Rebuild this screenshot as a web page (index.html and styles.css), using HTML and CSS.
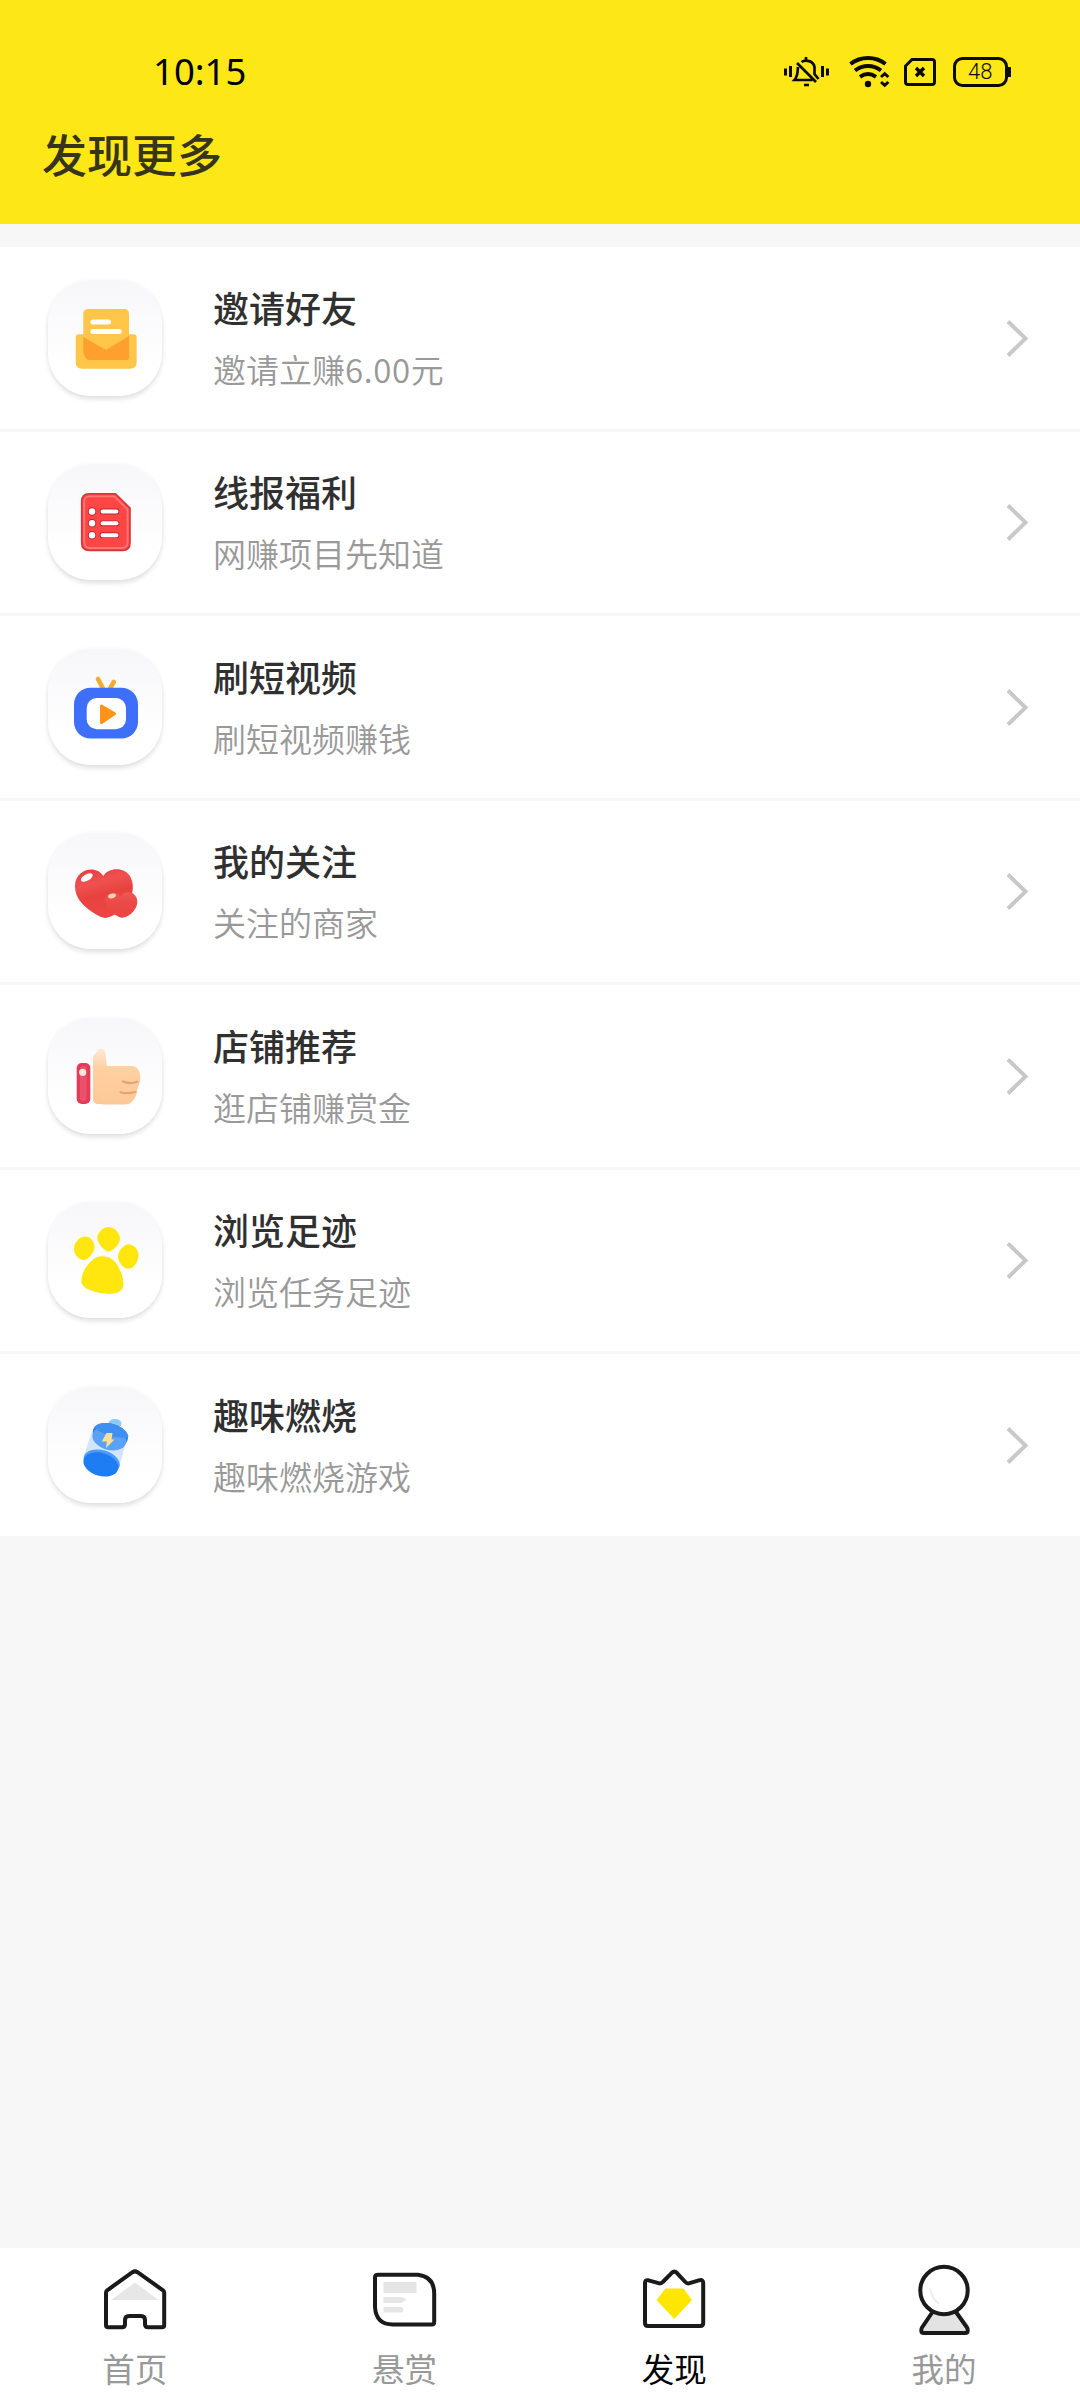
FILE: index.html
```html
<!DOCTYPE html>
<html lang="zh-CN">
<head>
<meta charset="utf-8">
<title>发现更多</title>
<link rel="stylesheet" href="styles.css">
</head>
<body>
<div class="app">
  <header class="header">
    <div class="status">
      <span class="time">10:15</span>
      <svg class="status-icons" width="240" height="40" viewBox="0 0 240 40" fill="none" stroke="#0c0a00" stroke-width="3">
        <!-- muted bell -->
        <path d="M5.500 16.500v7M10.500 14v11M42.500 14v11M47.500 16.500v7"/>
        <path d="M26 5v3M21.500 10c4-3 12-1 13 5v7l4 5M18 15c-.5 5 0 9-3.500 13h18M17 11l19 19" stroke-width="2.700"/>
        <path d="M24 33h5" stroke-width="2.600"/>
        <!-- wifi -->
        <path d="M70.500 12c10-8 25-8 35 0M75 18.500c8-6 18-6 26 0M80 24.800c5-3.500 11-3.500 16 0" stroke-width="4"/>
        <circle cx="88" cy="32" r="3.200" fill="#0c0a00" stroke="none"/>
        <path d="M101 25l3.700-3.300 3.700 3.300M101 30l3.700 3.300 3.700-3.300" stroke-width="3"/>
        <!-- sim -->
        <path d="M132 7.500h20a2.500 2.500 0 0 1 2.500 2.500v20a2.500 2.500 0 0 1-2.500 2.500h-24a2.500 2.500 0 0 1-2.500-2.500V14z"/>
        <path d="M136 16l8 8M144 16l-8 8" stroke-width="3.400"/>
        <!-- battery -->
        <rect x="174.500" y="6.500" width="52" height="27" rx="8"/>
        <path d="M229.500 15v10" stroke-width="3"/>
        <text x="200.300" y="27" class="battery-text">48</text>
      </svg>
    </div>
    <h1 class="page-title">发现更多</h1>
  </header>

  <main class="list">
    <a class="row">
      <span class="tile"><svg viewBox="0 0 114 116">
        <path d="M40.500 29H76q5 0 5 5v20.300h4.500q3.200 0 3.200 3.200V82q0 6.700-6.500 6.700h-48q-6.500 0-6.500-6.700V57.500q0-3.200 3.200-3.200h4.400V34q0-5 5.200-5z" fill="#ffc64a"/>
        <path d="M35.300 57L58 70l23-14v21.500q0 2.500-2.500 2.500H42q-3 0-4.500-2.500T35.300 72z" fill="#ff9f2e"/>
        <path d="M45 42h15.500M45 51.600h26.200" stroke="#fff" stroke-width="5" stroke-linecap="round"/>
      </svg></span>
      <span class="text"><b class="name">邀请好友</b><span class="desc">邀请立赚<span class="amount">6.00</span>元</span></span>
      <svg class="chevron" viewBox="0 0 24 40"><path d="M2 2.500L19.500 19.500 2 36.500"/></svg>
    </a>
    <a class="row">
      <span class="tile"><svg viewBox="0 0 114 116">
        <path d="M41 29.800h26.500L82 44v35q0 7.500-7.500 7.500H41.500q-7.800 0-7.800-7.500V37.500q0-7.700 7.300-7.700z" fill="#ff4644" stroke="#d6343d" stroke-width="1.600"/>
        <path d="M41.500 32.300h25L79.600 45.500V78q0 6-6 6H42q-5.800 0-5.800-6V38q0-5.700 5.300-5.700z" fill="none" stroke="#ff7771" stroke-width="1.800"/>
        <path d="M44 47.500h.1M44 59.300h.1M44 71.200h.1" stroke="#bd2630" stroke-width="8.500" stroke-linecap="round"/>
        <path d="M54.500 47.500h14M54.500 59.300h14M54.500 71.200h14" stroke="#bd2630" stroke-width="5.800" stroke-linecap="round"/>
        <path d="M44 47.500h.1M44 59.300h.1M44 71.200h.1" stroke="#fff" stroke-width="6.400" stroke-linecap="round"/>
        <path d="M54.500 47.500h14M54.500 59.300h14M54.500 71.200h14" stroke="#fff" stroke-width="4" stroke-linecap="round"/>
      </svg></span>
      <span class="text"><b class="name">线报福利</b><span class="desc">网赚项目先知道</span></span>
      <svg class="chevron" viewBox="0 0 24 40"><path d="M2 2.500L19.500 19.500 2 36.500"/></svg>
    </a>
    <a class="row">
      <span class="tile"><svg viewBox="0 0 114 116">
        <path d="M50 30l5 9.500M65.800 33L62 39.500" stroke="#f0ad2e" stroke-width="4.600" stroke-linecap="round"/>
        <rect x="26" y="38.700" width="64" height="50.800" rx="16.500" fill="#3d6ffb"/>
        <rect x="38.700" y="49" width="39.300" height="31.300" rx="10" fill="#fff"/>
        <path d="M53.500 57v16.500L66.500 64.800z" fill="#ff9418" stroke="#ff9418" stroke-width="3" stroke-linejoin="round"/>
      </svg></span>
      <span class="text"><b class="name">刷短视频</b><span class="desc">刷短视频赚钱</span></span>
      <svg class="chevron" viewBox="0 0 24 40"><path d="M2 2.500L19.500 19.500 2 36.500"/></svg>
    </a>
    <a class="row">
      <span class="tile"><svg viewBox="0 0 114 116">
        <defs>
          <linearGradient id="heart" x1="0" y1="0" x2=".3" y2="1"><stop offset="0" stop-color="#e23c40"/><stop offset=".35" stop-color="#ef5150"/><stop offset=".6" stop-color="#e8423f"/><stop offset="1" stop-color="#ee4544"/></linearGradient>
          <linearGradient id="small-heart" x1="0" y1="0" x2="0" y2="1"><stop offset="0" stop-color="#ee5a54"/><stop offset=".4" stop-color="#ea4a47"/><stop offset="1" stop-color="#ee4443"/></linearGradient>
          <linearGradient id="skin" x1="0" y1="0" x2="0" y2="1"><stop offset="0" stop-color="#ffe9dc"/><stop offset=".35" stop-color="#ffd0a0"/><stop offset="1" stop-color="#fdc898"/></linearGradient>
        </defs>
        <path d="M55.300 43C60 35 76 33 82.500 44c5 10 2 24-8 31-5 5-9 8-14 9.300q-4 1.400-8-.5C40 77 27 68 27 53 27 36 48 31 55.300 43z" fill="url(#heart)"/>
        <path d="M72.500 63.500c4-6 13-5.500 16 1 2.500 7-1.500 13.500-7 17.500q-6 4-10.500 2C64 80 57 76 57.500 67.500 58 59 68.500 57 72.500 63.500z" fill="url(#small-heart)"/>
        <ellipse cx="38.800" cy="44.500" rx="6.600" ry="3.200" fill="#fff" transform="rotate(-30 38.800 44.500)"/>
        <ellipse cx="64" cy="63" rx="4" ry="2.200" fill="#ffd3b5" transform="rotate(-15 64 63)"/>
      </svg></span>
      <span class="text"><b class="name">我的关注</b><span class="desc">关注的商家</span></span>
      <svg class="chevron" viewBox="0 0 24 40"><path d="M2 2.500L19.500 19.500 2 36.500"/></svg>
    </a>
    <a class="row">
      <span class="tile"><svg viewBox="0 0 114 116">
        <rect x="28.700" y="45" width="13.600" height="41" rx="5" fill="#e53b59"/>
        <rect x="32" y="48" width="6.500" height="35" rx="3" fill="#f0607a" opacity=".6"/>
        <circle cx="34.700" cy="54.300" r="3.600" fill="#ffe3dc"/>
        <path d="M45 41c0-5 3-5 4-8 1-4 8-3.500 8.500 2 .7 5 .5 8 1.500 13h25c5 0 8.300 5 8.300 11.500 0 6-2 8-3 12-.7 8-4 11-8 14.500-3 1-28 .5-32.300 0q-4-1-4-5z" fill="url(#skin)"/>
        <path d="M75 63.500c4 2 9 2 14.500.2M72.500 74.300c5 1.500 10 1 15-.3" fill="none" stroke="#e6a46e" stroke-width="2.200" stroke-linecap="round"/>
      </svg></span>
      <span class="text"><b class="name">店铺推荐</b><span class="desc">逛店铺赚赏金</span></span>
      <svg class="chevron" viewBox="0 0 24 40"><path d="M2 2.500L19.500 19.500 2 36.500"/></svg>
    </a>
    <a class="row">
      <span class="tile"><svg viewBox="0 0 114 116" fill="#ffe60f">
        <path d="M37 34.500c5 0 9.500 5 9.500 10.500S40 57.500 36 58c-4 0-10-4-10-11s6-12.500 11-12.500z"/>
        <path d="M60.500 25c6 0 11.500 6 11.500 12 0 5-7.500 12.500-11.500 12.500S49.300 41 49.300 36 54.500 25 60.500 25z"/>
        <path d="M80.500 42.300c5 0 10 5 10 11S86 66.800 80.500 66.800 70 60 70 54.500s6-12.200 10.500-12.200z"/>
        <path d="M54 54.200c7 0 12.500 3 16 10 4 7 5.500 12 5.300 19-.3 6-6 8.600-14 8.600-10-.3-28-3.800-28-12.800 0-10 10-24.800 20.700-24.800z"/>
      </svg></span>
      <span class="text"><b class="name">浏览足迹</b><span class="desc">浏览任务足迹</span></span>
      <svg class="chevron" viewBox="0 0 24 40"><path d="M2 2.500L19.500 19.500 2 36.500"/></svg>
    </a>
    <a class="row">
      <span class="tile"><svg viewBox="0 0 114 116">
        <ellipse cx="67" cy="36.500" rx="6.500" ry="4.500" fill="#8bcbff"/>
        <path d="M43.500 46L79 52 71 80 35.500 70z" fill="#d3e4ff"/>
        <g transform="rotate(16 62 49)">
          <ellipse cx="62" cy="48" rx="18" ry="11.500" fill="#2b78e8"/>
          <ellipse cx="62" cy="51.500" rx="17.300" ry="11.500" fill="#5aa1f8"/>
          <path d="M44.500 45c3-11 32-11 35.500 0-7 5-28 5-35.500 0z" fill="#3f8ef2"/>
        </g>
        <g transform="rotate(16 53 77)">
          <ellipse cx="53" cy="74.500" rx="18.500" ry="11.500" fill="#4b9bff"/>
          <ellipse cx="53" cy="77.500" rx="17.800" ry="11.500" fill="#1f7df3"/>
        </g>
        <path d="M58.500 46h6l-1 6.500h3L58 61l.8-6.500h-5z" fill="#ffdd9a"/>
      </svg></span>
      <span class="text"><b class="name">趣味燃烧</b><span class="desc">趣味燃烧游戏</span></span>
      <svg class="chevron" viewBox="0 0 24 40"><path d="M2 2.500L19.500 19.500 2 36.500"/></svg>
    </a>
  </main>

  <nav class="tabs">
    <a class="tab">
      <svg viewBox="0 0 80 80">
        <path d="M40 22.500L63.500 40H16z" fill="#e7e7e7"/>
        <path d="M37.500 12.200q2.500-1.600 5 0L68 30.300q1.200 1 1.200 2.500V65q0 2.300-2.300 2.300H53q-3 0-3-3V60q0-4-4-4H34q-4 0-4 4v4.300q0 3-3 3H13.300Q11 67.300 11 65V32.800q0-1.500 1.200-2.500z"/>
      </svg><span>首页</span>
    </a>
    <a class="tab">
      <svg viewBox="0 0 80 80">
        <path d="M18.500 22h33v11h-33zM18.500 37h18l5 2.500-5 3.500h-18zM18.500 47h18q4 3 0 5.500h-18z" fill="#e5e5e5"/>
        <path d="M13.500 14.700H53q16.200 2 16.200 19V62q0 2.500-2.500 2.500H28Q11 64.500 10 47V17q0-2.300 3.500-2.300z"/>
      </svg><span>悬赏</span>
    </a>
    <a class="tab active">
      <svg viewBox="0 0 80 80">
        <path d="M31.500 28.500h18L58 40 40.300 59 22.500 40z" fill="#ffe600"/>
        <path d="M11 23q0-3.500 3.500-2.700l10 2.900q2.500.8 4.300-1.200l9-9.200q2.500-2.300 5 0l8.500 9.200q1.800 2 4.300 1.200l10-3q3.600-.8 3.600 2.800V63q0 3-3 3H14q-3 0-3-3z"/>
      </svg><span>发现</span>
    </a>
    <a class="tab">
      <svg viewBox="0 0 80 80">
        <path d="M29 52h23l11.500 16v5H17.500v-5z" fill="#e3e3e3"/>
        <circle cx="40" cy="30.500" r="23.700"/>
        <path d="M28.500 52L18 67.500q-.7 1-.7 3Q17.300 73 20 73h41q2.700 0 2.700-2.500 0-2-.7-3L52 52"/>
        <path class="glint" d="M26 28q1 10 9 16"/>
      </svg><span>我的</span>
    </a>
  </nav>
</div>
</body>
</html>
```

FILE: styles.css
```css
* { box-sizing: border-box; }

body {
  margin: 0;
  background: #f7f7f7;
  font-family: "Noto Sans CJK SC", sans-serif;
}

.app {
  display: flex;
  flex-direction: column;
  width: 1080px;
  height: 2400px;
}

.header {
  height: 224px;
  padding-top: 52px;
  background: #fde716;
}

.status {
  display: flex;
  align-items: center;
  justify-content: space-between;
  height: 40px;
  padding: 0 60px 0 153px;
}

.time {
  margin-bottom: 2px;
  font: 400 36.5px/40px "Noto Sans", sans-serif;
  color: #000;
}

.status-icons { display: block; }

.battery-text {
  fill: #0c0a00;
  stroke: none;
  font: 300 22px "Roboto", sans-serif;
  text-anchor: middle;
}

.page-title {
  margin: 30px 0 0 42px;
  font-size: 45px;
  font-weight: 500;
  line-height: 64px;
  color: #37341c;
}

.list {
  display: flex;
  flex-direction: column;
  margin-top: 23px;
}

.row {
  display: flex;
  align-items: center;
  height: 184.5px;
  padding: 0 50px 0 48px;
  background: #fff;
  border-bottom: 3px solid #f7f7f7;
}

.tile {
  width: 114px;
  height: 116px;
  border-radius: 43px;
  background: linear-gradient(#f7f7fa, #fff 75%);
  box-shadow: 0 3px 5px rgba(0, 0, 0, .13), 0 -1px 5px rgba(0, 0, 0, .02);
}

.tile svg {
  display: block;
  width: 114px;
  height: 116px;
}

.text {
  display: flex;
  flex: 1;
  flex-direction: column;
  gap: 12px;
  margin-left: 51px;
}

.name {
  font-size: 36px;
  font-weight: 500;
  line-height: 50px;
  color: #303030;
}

.desc {
  font-size: 33px;
  font-weight: 350;
  line-height: 50px;
  color: #999;
}

.amount { letter-spacing: .6px; }

.chevron {
  width: 24px;
  height: 40px;
  margin-top: 2px;
  fill: none;
  stroke: #c8c8c8;
  stroke-width: 4;
}

.tabs {
  display: grid;
  grid-template-columns: repeat(4, 1fr);
  height: 152px;
  margin-top: auto;
  padding: 12px 1px 0 0;
  background: #fff;
}

.tab {
  display: flex;
  flex-direction: column;
  align-items: center;
  font-size: 32.5px;
  line-height: 48px;
  color: #999;
}

.tab svg {
  width: 80px;
  height: 80px;
  margin-bottom: 4px;
  fill: none;
  stroke-linejoin: round;
}

.tab svg path:not([fill]),
.tab svg circle {
  stroke: #1a1a1a;
  stroke-width: 4;
}

.tab svg .glint:not([fill]) {
  stroke: #ededed;
  stroke-width: 2;
}

.active { color: #000; }
```
